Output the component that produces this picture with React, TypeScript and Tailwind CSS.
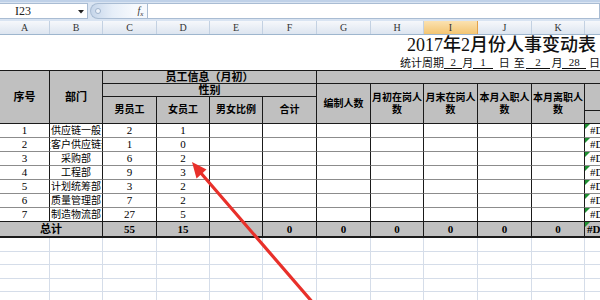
import React from "react";

const COLS = ["A", "B", "C", "D", "E", "F", "G", "H", "I", "J", "K", "L"];
const GRID = "grid grid-cols-[50px_53px_54px_53px_53px_54px_54px_53px_54px_54px_53px_60px] w-[645px]";

const ROWS: [string, string, string, string][] = [
  ["1", "供应链一般", "2", "1"],
  ["2", "大客户供应链部", "1", "0"],
  ["3", "采购部", "6", "2"],
  ["4", "工程部", "9", "3"],
  ["5", "计划统筹部", "3", "2"],
  ["6", "质量管理部", "7", "2"],
  ["7", "制造物流部", "27", "5"],
];

const SERIF = "font-['Liberation_Serif','Noto_Sans_CJK_SC',serif]";
const HC =
  "bg-[#c0c0c0] border-r border-b border-[#1a1a1a] flex items-center justify-center text-center font-bold text-[10px] leading-[12px]";

function ErrTri() {
  return (
    <span className="absolute top-0 left-0 w-0 h-0 border-t-[5px] border-t-[#1f8f32] border-r-[5px] border-r-transparent" />
  );
}

export default function App() {
  return (
    <div className="relative w-[600px] h-[300px] overflow-hidden bg-white text-black font-['Liberation_Sans','Noto_Sans_CJK_SC',sans-serif]">
      {/* formula bar */}
      <div className="h-[21px] flex flex-col bg-[#d9e4f2]">
        <div className="h-[2px] bg-[#bfd1e8]" />
        <div className="flex h-[16px] mt-[1px]">
          <div className="relative w-[88px] bg-white border border-l-0 border-[#a9bcd3] flex items-center">
            <span className={`pl-[15px] text-[12px] leading-[14px] text-[#222] ${SERIF}`}>I23</span>
            <svg className="absolute right-[3px] top-[6px]" width="6" height="4" viewBox="0 0 6 4">
              <path d="M0 0 L6 0 L3 3.5 Z" fill="#222" />
            </svg>
          </div>
          <div className="ml-[2px] w-[44px] rounded-l-full border border-r-0 border-[#a9bcd3] bg-gradient-to-r from-[#c6d6ea] via-[#e6eef8] to-[#f6f9fd] flex items-center">
            <span className="ml-[4px] w-[6px] h-[6px] rounded-full border border-[#9fb3cc] bg-[#eef3fa]" />
          </div>
          <div className="w-[13px] flex items-center justify-center bg-[#f6f9fd] border-y border-[#a9bcd3]">
            <span className={`italic text-[10px] leading-[12px] text-[#333] ${SERIF}`}>
              f<sub className="text-[7px]">x</sub>
            </span>
          </div>
          <div className="flex-1 bg-white border border-[#a9bcd3]" />
        </div>
      </div>

      {/* column headers */}
      <div className={`${GRID} h-[14px] border-b border-[#9eb6ce]`}>
        {COLS.map((c) => (
          <div
            key={c}
            className={
              c === "I"
                ? `flex items-center justify-center border-r border-[#e3a14a] bg-gradient-to-b from-[#fbe2b1] to-[#f3c571] text-[10px] leading-[12px] text-[#333] ${SERIF}`
                : `flex items-center justify-center border-r border-[#c3d1e2] bg-gradient-to-b from-[#f6f8fb] to-[#dde5f0] text-[10px] leading-[12px] text-[#333] ${SERIF}`
            }
          >
            {c}
          </div>
        ))}
      </div>

      {/* title row */}
      <div className="h-[21px] flex items-center pl-[407px] whitespace-nowrap">
        <span className={`text-[18px] leading-[21px] font-medium text-[#111] ${SERIF}`}>2017年2月份人事变动表</span>
      </div>

      {/* stats row */}
      <div className="h-[14px] flex items-end pl-[400px] whitespace-nowrap text-[11px] leading-[12px] text-[#111] pb-[1px]">
        <span className="w-[45px]">统计周期</span>
        <span className={`w-[18px] text-center border-b border-[#111] ${SERIF}`}>2</span>
        <span className="w-[11px]">月</span>
        <span className={`w-[20px] text-center border-b border-[#111] ${SERIF}`}>1</span>
        <span className="w-[6px]" />
        <span className="w-[11px]">日</span>
        <span className="w-[4px]" />
        <span className="w-[11px]">至</span>
        <span className="w-[1px]" />
        <span className={`w-[25px] text-center border-b border-[#111] ${SERIF}`}>2</span>
        <span className="w-[1px]" />
        <span className="w-[11px]">月</span>
        <span className={`w-[24px] text-center border-b border-[#111] ${SERIF}`}>28</span>
        <span className="w-[3px]" />
        <span className="w-[11px]">日</span>
      </div>

      {/* table */}
      <div
        className={`${GRID} grid-rows-[13px_13px_14px_13px_repeat(7,14px)_16px] border-t border-[#1a1a1a]`}
      >
        {/* header row 1 */}
        <div className={`${HC} row-span-4 text-[11px]`}>序号</div>
        <div className={`${HC} row-span-4 text-[11px]`}>部门</div>
        <div className={`${HC} col-span-4 text-[11px]`}>员工信息（月初）</div>
        <div className={`${HC} col-span-6`} />
        {/* header row 2 */}
        <div className={`${HC} col-span-4 text-[11px]`}>性别</div>
        <div className={`${HC} row-span-3`}>编制人数</div>
        <div className={`${HC} row-span-3`}>
          月初在岗人
          <br />数
        </div>
        <div className={`${HC} row-span-3`}>
          月末在岗人
          <br />数
        </div>
        <div className={`${HC} row-span-3`}>
          本月入职人
          <br />数
        </div>
        <div className={`${HC} row-span-3`}>
          本月离职人
          <br />数
        </div>
        <div className={`${HC} row-span-2`} />
        {/* header row 3 */}
        <div className={`${HC} row-span-2`}>男员工</div>
        <div className={`${HC} row-span-2`}>女员工</div>
        <div className={`${HC} row-span-2`}>男女比例</div>
        <div className={`${HC} row-span-2`}>合计</div>
        {/* header row 4 */}
        <div className={HC} />

        {/* data rows */}
        {ROWS.map((r, i) => {
          const bb = i === 6 ? "border-b-[#1a1a1a]" : "border-b-[#8c8c8c]";
          const base = `border-r border-r-[#1a1a1a] border-b ${bb} flex items-center justify-center overflow-hidden whitespace-nowrap bg-white`;
          return (
            <React.Fragment key={i}>
              <div className={`${base} text-[11px] ${SERIF}`}>{r[0]}</div>
              <div className={`${base} text-[10px]`}>
                <span className="shrink-0">{r[1]}</span>
              </div>
              <div className={`${base} text-[11px] ${SERIF}`}>{r[2]}</div>
              <div className={`${base} text-[11px] ${SERIF}`}>{r[3]}</div>
              <div className={base} />
              <div className={base} />
              <div className={base} />
              <div className={base} />
              <div className={base} />
              <div className={base} />
              <div className={base} />
              <div
                className={`relative border-r border-r-[#1a1a1a] border-b ${bb} flex items-center pl-[5px] overflow-hidden whitespace-nowrap text-[11px] bg-white ${SERIF}`}
              >
                <ErrTri />
                #DIV/0!
              </div>
            </React.Fragment>
          );
        })}

        {/* total row */}
        <div className="col-span-2 bg-[#c0c0c0] border-r border-[#1a1a1a] border-b-2 flex items-center justify-center font-bold text-[11px]">
          总计
        </div>
        {["55", "15", "", "0", "0", "0", "0", "0", "0"].map((v, i) => (
          <div
            key={i}
            className={`bg-[#c0c0c0] border-r border-[#1a1a1a] border-b-2 flex items-center justify-center font-bold text-[11px] ${SERIF}`}
          >
            {v}
          </div>
        ))}
        <div
          className={`relative bg-[#c0c0c0] border-r border-[#1a1a1a] border-b-2 flex items-center pl-[2px] overflow-hidden whitespace-nowrap font-bold text-[11px] ${SERIF}`}
        >
          <ErrTri />
          #DIV/0!
        </div>
      </div>

      {/* empty grid */}
      <div className={`${GRID} grid-rows-[14px_13px_14px_13px_14px]`}>
        {Array.from({ length: 60 }).map((_, i) => (
          <div key={i} className="border-r border-b border-[#d5dde9]" />
        ))}
      </div>

      {/* red arrow annotation */}
      <svg className="absolute inset-0 pointer-events-none" width="600" height="300" viewBox="0 0 600 300">
        <line x1="314" y1="304" x2="200" y2="172" stroke="#e8302a" strokeWidth="3.2" strokeLinecap="round" />
        <path d="M192 162 L206.5 169.5 L196.5 178.5 Z" fill="#e8302a" />
      </svg>
    </div>
  );
}
